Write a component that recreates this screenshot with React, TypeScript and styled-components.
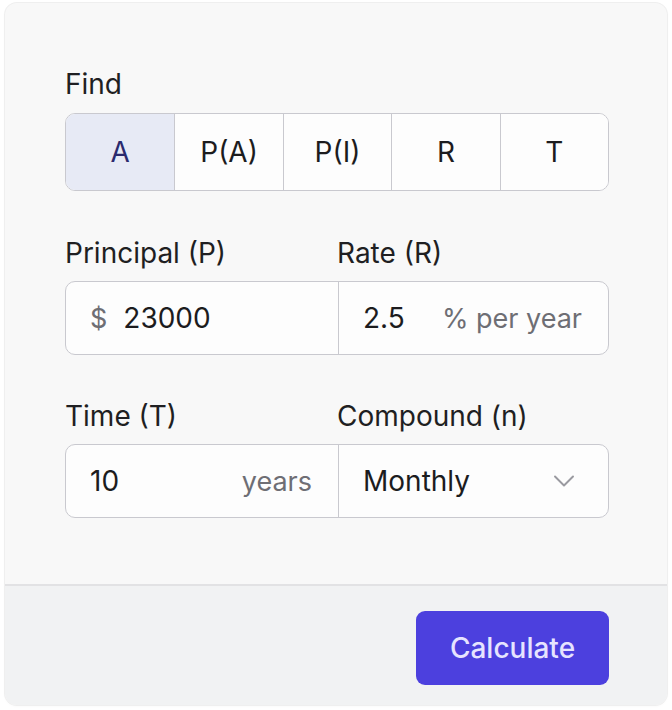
import styled, { createGlobalStyle } from 'styled-components';
import { ChevronDown } from 'lucide-react';

const Global = createGlobalStyle`
    html, body {
        margin: 0;
        background: #ffffff;
        font-family: Inter, "Noto Sans", sans-serif;
        color: #1c1c1e;
    }
    * { box-sizing: border-box; }
`

const Card = styled.div`
    margin: 3px 5px 5px;
    height: 702px;
    background: #f8f8f8;
    border-radius: 12px;
    box-shadow: 0 0 0 1px #efefef, 0 1px 3px rgba(0, 0, 0, 0.04);
    display: flex;
    flex-direction: column;
    overflow: hidden;
`

const Body = styled.div`
    flex: 1;
    padding: 63px 58px 0 60px;
    display: flex;
    flex-direction: column;
`

const Label = styled.div`
    font-size: 28px;
    line-height: 36px;
    color: #1f1f22;
`

const LabelRow = styled.div<{ $top: number }>`
    display: grid;
    grid-template-columns: 272px 1fr;
    margin-top: ${p => p.$top}px;
`

const Segmented = styled.div`
    margin-top: 11px;
    display: grid;
    grid-template-columns: repeat(5, 1fr);
    height: 78px;
    border: 1px solid #c9c9cf;
    border-radius: 10px;
    overflow: hidden;
    background: #fdfdfd;
`

const Segment = styled.button<{ $active?: boolean }>`
    all: unset;
    display: flex;
    align-items: center;
    justify-content: center;
    font-family: Inter, sans-serif;
    font-size: 28px;
    color: ${p => (p.$active ? '#2b2a6e' : '#1c1c1e')};
    background: ${p => (p.$active ? '#e7eaf5' : '#fdfdfd')};
    border-left: 1px solid #c9c9cf;

    &:first-child {
        border-left: 0;
    }
`

const Group = styled.div`
    margin-top: 10px;
    display: grid;
    grid-template-columns: 272px 1fr;
    height: 74px;
    border: 1px solid #c9c9cf;
    border-radius: 10px;
    background: #fdfdfd;
    overflow: hidden;
`

const Field = styled.div<{ $divider?: boolean }>`
    display: flex;
    align-items: center;
    padding: 0 26px 0 24px;
    font-size: 28px;
    border-left: ${p => (p.$divider ? '1px solid #c9c9cf' : '0')};
`

const Value = styled.span`
    color: #1c1c1e;
    flex: 1;
`

const Addon = styled.span`
    color: #6e6e74;
    font-size: 27px;
`

const Prefix = styled(Addon)`
    margin-right: 16px;
`

const Chevron = styled(ChevronDown)`
    color: #9a9aa0;
    flex-shrink: 0;
`

const Footer = styled.div`
    height: 121px;
    border-top: 2px solid #e2e2e4;
    background: #f1f2f3;
    display: flex;
    justify-content: flex-end;
    align-items: flex-start;
    padding: 25px 58px 0 0;
`

const CalcButton = styled.button`
    all: unset;
    width: 193px;
    height: 74px;
    border-radius: 9px;
    background: #4c40de;
    color: #e6e4ff;
    font-family: Inter, sans-serif;
    font-size: 28px;
    font-weight: 500;
    display: flex;
    align-items: center;
    justify-content: center;
`

export default function App() {
    const options = ['A', 'P(A)', 'P(I)', 'R', 'T']
    return (
        <>
            <Global />
            <Card>
                <Body>
                    <Label>Find</Label>
                    <Segmented>
                        {options.map((o, i) => (
                            <Segment key={o} $active={i === 0}>{o}</Segment>
                        ))}
                    </Segmented>

                    <LabelRow $top={44}>
                        <Label>Principal (P)</Label>
                        <Label>Rate (R)</Label>
                    </LabelRow>
                    <Group>
                        <Field>
                            <Prefix>$</Prefix>
                            <Value>23000</Value>
                        </Field>
                        <Field $divider>
                            <Value>2.5</Value>
                            <Addon>% per year</Addon>
                        </Field>
                    </Group>

                    <LabelRow $top={43}>
                        <Label>Time (T)</Label>
                        <Label>Compound (n)</Label>
                    </LabelRow>
                    <Group>
                        <Field>
                            <Value>10</Value>
                            <Addon>years</Addon>
                        </Field>
                        <Field $divider>
                            <Value>Monthly</Value>
                            <Chevron size={36} strokeWidth={1.3} />
                        </Field>
                    </Group>
                </Body>
                <Footer>
                    <CalcButton>Calculate</CalcButton>
                </Footer>
            </Card>
        </>
    )
}
